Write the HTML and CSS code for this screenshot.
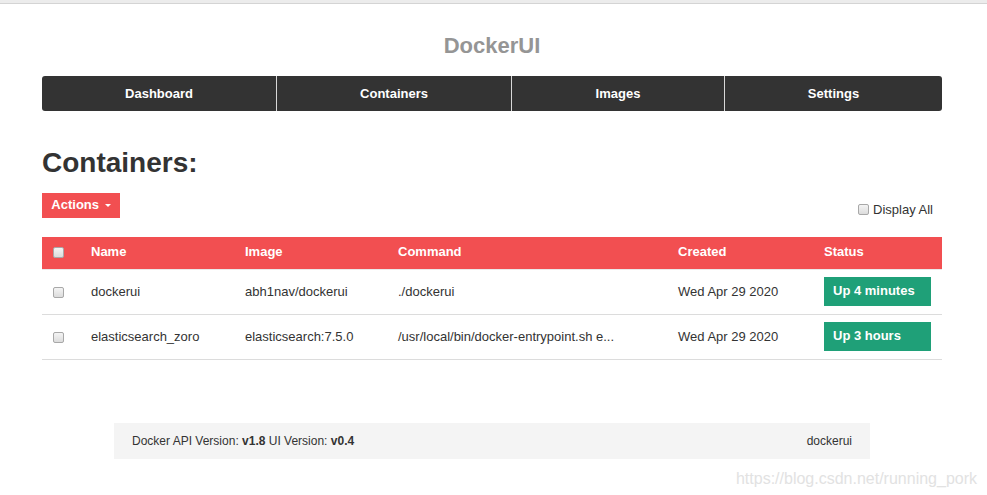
FILE: index.html
```html
<!DOCTYPE html>
<html lang="en">
<head>
  <meta charset="UTF-8">
  <title>DockerUI</title>
  <link rel="stylesheet" href="styles.css">
</head>
<body>
  <div class="top-strip"></div>
  <div class="container">
    <div class="masthead">
      <h3 class="brand">DockerUI</h3>
      <ul class="nav">
        <li class="nav-item nav-a"><a href="#">Dashboard</a></li>
        <li class="nav-item nav-b"><a href="#">Containers</a></li>
        <li class="nav-item nav-c"><a href="#">Images</a></li>
        <li class="nav-item nav-d"><a href="#">Settings</a></li>
      </ul>
    </div>

    <h2 class="page-title">Containers:</h2>

    <div class="toolbar">
      <button class="btn-actions">Actions <span class="caret"></span></button>
      <label class="display-all"><input type="checkbox"> Display All</label>
    </div>

    <table class="table">
      <colgroup>
        <col class="c-check">
        <col class="c-name">
        <col class="c-image">
        <col class="c-cmd">
        <col class="c-created">
        <col class="c-status">
      </colgroup>
      <thead>
        <tr>
          <th class="cell-check"><input type="checkbox"></th>
          <th>Name</th>
          <th>Image</th>
          <th>Command</th>
          <th>Created</th>
          <th>Status</th>
        </tr>
      </thead>
      <tbody>
        <tr>
          <td class="cell-check"><input type="checkbox"></td>
          <td>dockerui</td>
          <td>abh1nav/dockerui</td>
          <td>./dockerui</td>
          <td>Wed Apr 29 2020</td>
          <td><span class="label-up">Up 4 minutes</span></td>
        </tr>
        <tr>
          <td class="cell-check"><input type="checkbox"></td>
          <td>elasticsearch_zoro</td>
          <td>elasticsearch:7.5.0</td>
          <td>/usr/local/bin/docker-entrypoint.sh e...</td>
          <td>Wed Apr 29 2020</td>
          <td><span class="label-up">Up 3 hours</span></td>
        </tr>
      </tbody>
    </table>
  </div>

  <div class="footer">
    <span>Docker API Version: <strong>v1.8</strong> UI Version: <strong>v0.4</strong></span>
    <span>dockerui</span>
  </div>

  <div class="watermark">https://blog.csdn.net/running_pork</div>
</body>
</html>
```

FILE: styles.css
```css
body {
  margin: 0;
  font-family: "Liberation Sans", Arial, sans-serif;
  font-size: 13px;
  color: #333;
  background: #fff;
}
.top-strip {
  height: 3px;
  background: #ececec;
  border-bottom: 1px solid #d4d4d4;
}
.container {
  width: 900px;
  margin: 0 42px;
}
.masthead {
  padding-top: 29px;
}
.brand {
  margin: 0;
  text-align: center;
  font-size: 22px;
  line-height: 26px;
  color: #959595;
}
.nav {
  display: flex;
  list-style: none;
  margin: 17px 0 0;
  padding: 0;
  height: 35px;
  background: #333;
  border-radius: 3px;
}
.nav-item {
  display: flex;
  align-items: center;
  justify-content: center;
  border-left: 1px solid #d8d8d8;
}
.nav-item:first-child {
  border-left: none;
}
.nav-a { width: 234px; }
.nav-b { width: 234px; }
.nav-c { width: 212px; }
.nav-d { flex: 1; }
.nav-item a {
  color: #fff;
  font-weight: bold;
  text-decoration: none;
  font-size: 13px;
}
.page-title {
  margin: 36px 0 0;
  font-size: 28px;
  line-height: 32px;
  color: #333;
}
.toolbar {
  display: flex;
  justify-content: space-between;
  margin-top: 14px;
}
.btn-actions {
  height: 25px;
  width: 78px;
  padding: 0 0 3px;
  border: none;
  background: #f24f51;
  color: #fff;
  font-family: inherit;
  font-weight: bold;
  font-size: 13px;
}
.caret {
  display: inline-block;
  width: 0;
  height: 0;
  margin-left: 2px;
  vertical-align: middle;
  border-top: 3px solid #fff;
  border-left: 3px solid transparent;
  border-right: 3px solid transparent;
}
.display-all {
  display: flex;
  align-items: center;
  align-self: flex-end;
  margin-right: 9px;
  margin-bottom: 1px;
  color: #333;
}
.display-all input,
.cell-check input {
  appearance: none;
  -webkit-appearance: none;
  box-sizing: border-box;
  width: 11px;
  height: 11px;
  margin: 0 4px 0 0;
  border: 1px solid #a8a8a8;
  border-radius: 2px;
  background: linear-gradient(#f4f4f4, #dcdcdc);
  vertical-align: middle;
}
.table {
  width: 900px;
  margin-top: 19px;
  border-collapse: collapse;
  table-layout: fixed;
}
.c-check { width: 41px; }
.c-name { width: 154px; }
.c-image { width: 153px; }
.c-cmd { width: 280px; }
.c-created { width: 146px; }
.c-status { width: 126px; }
.table th {
  background: #f24f51;
  color: #fff;
  text-align: left;
  font-weight: bold;
  height: 29px;
  padding: 0 8px 3px;
  border-bottom: 1px solid #e9e9e9;
}
.table td {
  height: 42px;
  padding: 0 8px 2px;
  border-bottom: 1px solid #dcdcdc;
  white-space: nowrap;
}
.table .cell-check {
  padding-left: 11px;
}
.label-up {
  display: block;
  width: 98px;
  height: 29px;
  line-height: 28px;
  padding-left: 9px;
  background: #1fa078;
  color: #fff;
  font-weight: bold;
}
.footer {
  display: flex;
  justify-content: space-between;
  align-items: center;
  width: 720px;
  height: 36px;
  margin: 63px 0 0 114px;
  padding: 0 18px;
  background: #f4f4f4;
  font-size: 12px;
  color: #333;
}
.watermark {
  margin: 11px 10px 0 0;
  text-align: right;
  font-size: 16px;
  color: #e2e2e2;
}
```
